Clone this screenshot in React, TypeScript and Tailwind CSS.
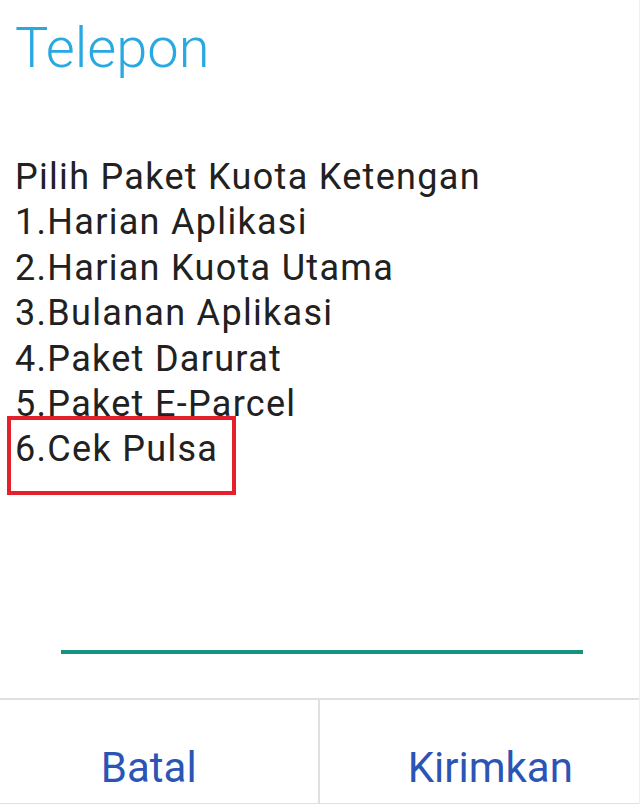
const menuLines = [
  'Pilih Paket Kuota Ketengan',
  '1.Harian Aplikasi',
  '2.Harian Kuota Utama',
  '3.Bulanan Aplikasi',
  '4.Paket Darurat',
  '5.Paket E-Parcel',
];

export default function App() {
  return (
    <div
      className="flex h-[804px] w-[640px] flex-col overflow-hidden border-r border-[#efefef] bg-white"
      style={{ fontFamily: 'Roboto, "Noto Sans", sans-serif' }}
    >
      <h1 className="pl-[15px] pt-[15px] text-[56px] font-light leading-[66px] text-[#29a9e1]">
        Telepon
      </h1>

      <div className="mt-[74px] pl-[15px] text-[36px] leading-[45.4px] tracking-[1.3px] text-[#212121]">
        {menuLines.map((line) => (
          <p key={line}>{line}</p>
        ))}
        <div className="relative">
          <p>6.Cek Pulsa</p>
          <div className="absolute -top-[11px] -bottom-[22px] -left-[8px] w-[229px] border-4 border-[#e3202b]" />
        </div>
      </div>

      <div className="ml-[61px] mt-[177px] h-[4px] w-[522px] bg-[#16927f]" />

      <div className="mt-[44px] flex flex-1 border-t-2 border-b border-[#e0e0e0]">
        <button className="flex flex-1 items-end justify-center border-r-2 border-[#e0e0e0] pb-[10px] pr-[20px] text-[42px] leading-[50px] text-[#2b55b5]">
          Batal
        </button>
        <button className="flex flex-1 items-end justify-center pb-[10px] pl-[22px] text-[42px] leading-[50px] text-[#2b55b5]">
          Kirimkan
        </button>
      </div>
    </div>
  );
}
